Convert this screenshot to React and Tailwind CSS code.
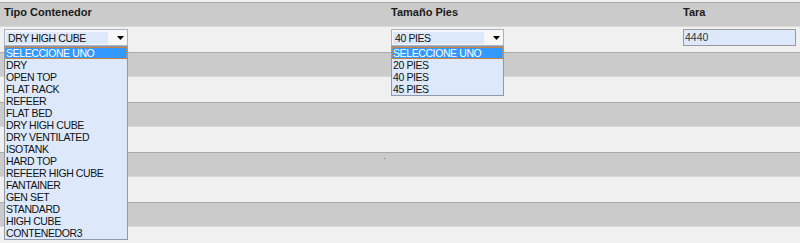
import React from "react";

const TIPOS = [
  "SELECCIONE UNO",
  "DRY",
  "OPEN TOP",
  "FLAT RACK",
  "REFEER",
  "FLAT BED",
  "DRY HIGH CUBE",
  "DRY VENTILATED",
  "ISOTANK",
  "HARD TOP",
  "REFEER HIGH CUBE",
  "FANTAINER",
  "GEN SET",
  "STANDARD",
  "HIGH CUBE",
  "CONTENEDOR3",
];
const PIES = ["SELECCIONE UNO", "20 PIES", "40 PIES", "45 PIES"];

function Arrow() {
  return (
    <svg width="7" height="4" viewBox="0 0 7 4" className="block">
      <path d="M0 0 H7 L3.5 4 Z" fill="#000" />
    </svg>
  );
}

function Select({ value, width, options }) {
  return (
    <div className="relative" style={{ width }}>
      <div className="h-[17px] border border-[#a7b3c6] bg-[#f7f7f7] flex items-center pl-[1px]">
        <div className="h-[12px] flex-1 bg-[#dde9fb] pl-[2px] leading-[12px] text-[10.5px] tracking-[-0.4px] text-[#111]">
          {value}
        </div>
        <div className="w-[19px] flex justify-end pr-[3px]">
          <Arrow />
        </div>
      </div>
      <div className="absolute left-0 top-[17px] z-10 w-full border border-[#8e9aac] bg-[#dde9fb]">
        {options.map((o, i) => (
          <div
            key={o}
            className={
              i === 0
                ? "h-[12px] leading-[12px] pl-[1px] text-[10.5px] tracking-[-0.4px] bg-[#3399ff] text-white outline outline-1 -outline-offset-1 outline-dotted outline-[#d08a4a]"
                : "h-[12px] leading-[12px] pl-[1px] text-[10.5px] tracking-[-0.4px] text-[#111]"
            }
          >
            {o}
          </div>
        ))}
      </div>
    </div>
  );
}

function GrayRow({ children }) {
  return (
    <div className="h-[25px] border-t border-[#a9a9a9] bg-[#cbcbcb] border-b border-b-[#d9d9d9] relative">
      {children}
    </div>
  );
}
function LightRow({ children }) {
  return <div className="h-[25px] bg-[#f0f0f0]">{children}</div>;
}

export default function App() {
  return (
    <div className="w-[800px] h-[243px] overflow-hidden bg-[#f0f0f0] pt-[2px] font-['Liberation_Sans',Arial,sans-serif]">
      <div className="h-[25px] border-t border-[#a9a9a9] bg-[#cbcbcb] flex text-[11px] leading-[16px] font-bold text-[#1a1a1a] border-b border-b-[#d9d9d9]">
        <div className="w-[387px] pl-[4px] pt-[1px]">Tipo Contenedor</div>
        <div className="w-[292px] pl-[4px] pt-[1px]">Tamaño Pies</div>
        <div className="flex-1 pl-[4px] pt-[1px]">Tara</div>
      </div>
      <div className="h-[25px] bg-[#f0f0f0] flex pt-[2px] relative z-10">
        <div className="w-[387px] pl-[4px]">
          <Select value="DRY HIGH CUBE" width="124px" options={TIPOS} />
        </div>
        <div className="w-[292px] pl-[4px]">
          <Select value="40 PIES" width="113px" options={PIES} />
        </div>
        <div className="flex-1 pl-[4px]">
          <div className="w-[113px] h-[17px] border border-[#9a9a9a] bg-[#dde9fb] pl-[1px] leading-[15px] text-[10.5px] text-[#333]">
            4440
          </div>
        </div>
      </div>
      <GrayRow />
      <LightRow />
      <GrayRow />
      <LightRow />
      <GrayRow>
        <div className="absolute left-[384px] top-[5px] w-[1px] h-[1px] bg-[#a07050]" />
      </GrayRow>
      <LightRow />
      <GrayRow />
      <LightRow />
    </div>
  );
}
